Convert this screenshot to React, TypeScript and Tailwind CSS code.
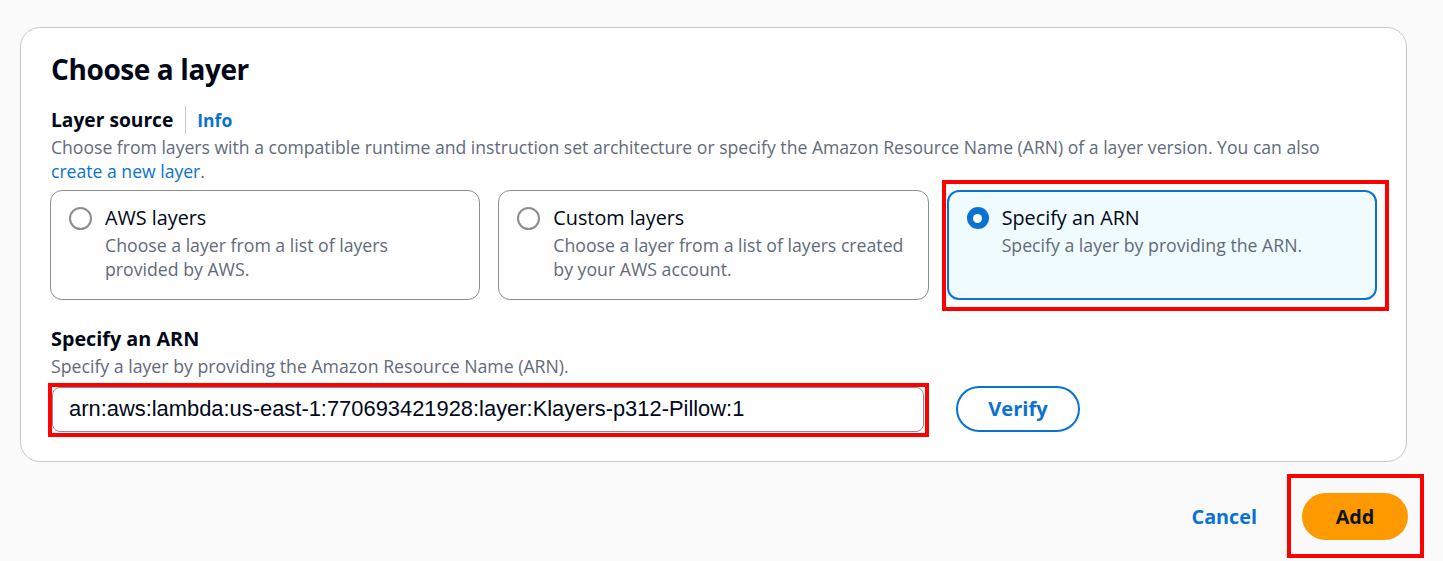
import React from "react";

function Radio({ checked }: { checked?: boolean }) {
  if (checked) {
    return (
      <span className="mt-[1px] flex h-[22px] w-[22px] shrink-0 items-center justify-center rounded-full bg-[#0972d3]">
        <span className="h-[9px] w-[9px] rounded-full bg-white" />
      </span>
    );
  }
  return <span className="mt-[1px] h-[23px] w-[23px] shrink-0 rounded-full border-2 border-[#8c8c94] bg-white" />;
}

function Tile({ title, desc, checked }: { title: string; desc: React.ReactNode; checked?: boolean }) {
  return (
    <div
      className={
        checked
          ? "flex h-[110px] min-w-0 gap-[13px] rounded-[12px] border-2 border-[#0972d3] bg-[#f0fbff] pl-[18px] pr-[10px] pt-[14px]"
          : "flex h-[110px] min-w-0 gap-[13px] rounded-[12px] border border-[#8c8c94] bg-white pl-[18px] pr-[10px] pt-[15px]"
      }
    >
      <Radio checked={checked} />
      <div className="flex min-w-0 flex-col">
        <div className="whitespace-nowrap text-[19.8px] leading-[24px] text-[#000716]">{title}</div>
        <div className="mt-[3px] whitespace-nowrap text-[17.7px] leading-[24px] text-[#5f6b7a]">{desc}</div>
      </div>
    </div>
  );
}

export default function App() {
  return (
    <div
      className="h-[561px] w-[1443px] overflow-hidden bg-[#fafafa] pl-[20px] pt-[27px]"
      style={{ fontFamily: '"Open Sans", "Noto Sans", sans-serif' }}
    >
      <div className="w-[1387px] rounded-[20px] border border-[#c6c6cd] bg-white px-[29px] pb-[29px] pt-[23px]">
        <h1 className="pl-[1px] text-[28px] font-bold leading-[36px] tracking-[-0.4px] text-[#000716]">
          Choose a layer
        </h1>

        <div className="mt-[19px] flex items-center pl-[1px]">
          <span className="text-[19.2px] font-bold leading-[24px] text-[#000716]">Layer source</span>
          <span className="ml-[12px] mr-[11px] h-[28px] w-px bg-[#c6c6cd]" />
          <span className="text-[17.5px] font-bold leading-[24px] text-[#0972d3]">Info</span>
        </div>
        <p className="mt-[1px] w-[1300px] pl-[1px] text-[17.6px] leading-[24px] text-[#5f6b7a]">
          Choose from layers with a compatible runtime and instruction set architecture or specify the Amazon Resource
          Name (ARN) of a layer version. You can also <span className="text-[#0972d3]">create a new layer</span>.
        </p>

        <div className="mt-[7px] grid grid-cols-3 gap-[18px]">
          <Tile title="AWS layers" desc={<>Choose a layer from a list of layers<br />provided by AWS.</>} />
          <Tile
            title="Custom layers"
            desc={<>Choose a layer from a list of layers created<br />by your AWS account.</>}
          />
          <div className="relative min-w-0">
            <div className="pointer-events-none absolute -bottom-[11px] -left-[5px] -right-[12px] -top-[10px] border-4 border-[#ff0000]" />
            <Tile title="Specify an ARN" desc="Specify a layer by providing the ARN." checked />
          </div>
        </div>

        <div className="mt-[27px] pl-[1px] text-[19.8px] font-bold leading-[24px] text-[#000716]">Specify an ARN</div>
        <div className="mt-[3px] pl-[1px] text-[17.7px] leading-[24px] text-[#5f6b7a]">
          Specify a layer by providing the Amazon Resource Name (ARN).
        </div>

        <div className="mt-[9px] flex items-center gap-[32px] pl-[2px]">
          <div className="relative">
            <div className="pointer-events-none absolute -bottom-[5px] -left-[4px] -right-[5px] -top-[4px] border-4 border-[#ff0000]" />
            <div
              className="flex h-[45px] w-[872px] items-center rounded-[8px] border border-[#8c8c94] bg-white px-[16px] text-[21.9px] text-[#000716]"
              style={{ fontFamily: '"Liberation Sans", Arial, sans-serif' }}
            >
              arn:aws:lambda:us-east-1:770693421928:layer:Klayers-p312-Pillow:1
            </div>
          </div>
          <button className="-mt-[2px] flex h-[46px] w-[124px] items-center justify-center rounded-full border-2 border-[#0972d3] bg-white text-[20.2px] font-bold text-[#0972d3]">
            Verify
          </button>
        </div>
      </div>

      <div className="mr-[35px] mt-[31px] flex items-center justify-end">
        <span className="mr-[45px] text-[19.8px] font-bold text-[#0972d3]">Cancel</span>
        <div className="relative">
          <div className="pointer-events-none absolute -bottom-[18px] -left-[15px] -right-[16px] -top-[19px] border-4 border-[#ff0000]" />
          <button className="flex h-[47px] w-[106px] items-center justify-center rounded-full bg-[#ff9900] text-[19.8px] font-bold text-[#0f141a]">
            Add
          </button>
        </div>
      </div>
    </div>
  );
}
